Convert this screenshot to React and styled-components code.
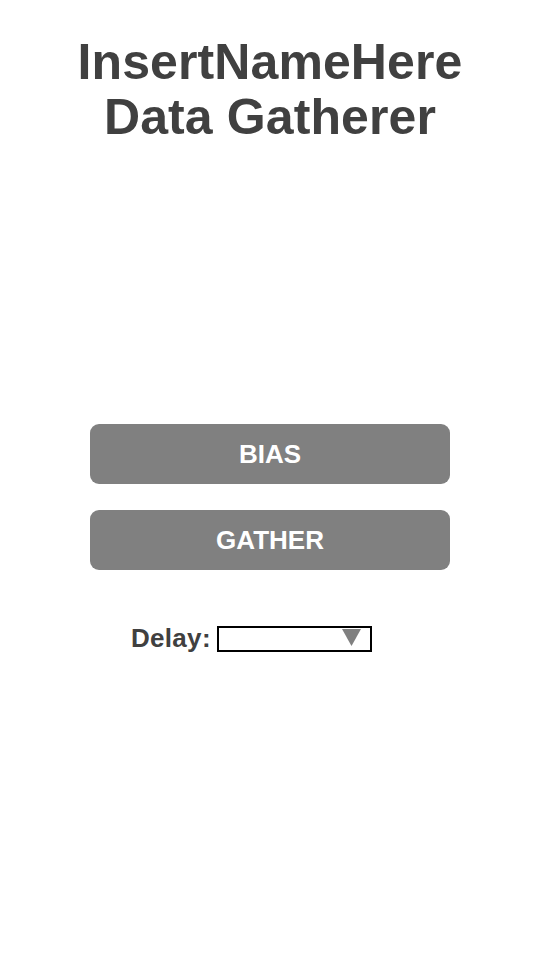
import React from 'react';
import styled, { createGlobalStyle } from 'styled-components';

const GlobalStyle = createGlobalStyle`
  body {
    margin: 0;
    background: #ffffff;
    font-family: "Liberation Sans", Arial, sans-serif;
  }
`;

const Page = styled.div`
  width: 540px;
  height: 960px;
  display: flex;
  flex-direction: column;
  align-items: center;
`;

const Title = styled.h1`
  margin: 35px 0 0;
  font-size: 50px;
  line-height: 55px;
  font-weight: bold;
  color: #404040;
  text-align: center;
  letter-spacing: 0.1px;
`;

const Actions = styled.div`
  margin-top: 279px;
  display: flex;
  flex-direction: column;
  gap: 26px;
`;

const ActionButton = styled.button`
  width: 360px;
  height: 60px;
  border: none;
  border-radius: 9px;
  background: #808080;
  color: #ffffff;
  font-family: "Liberation Sans", Arial, sans-serif;
  font-size: 26px;
  font-weight: bold;
  cursor: pointer;
  padding: 0;
`;

const DelayRow = styled.div`
  margin-top: 53px;
  align-self: flex-start;
  margin-left: 131px;
  display: flex;
  align-items: center;
  gap: 6px;
`;

const Label = styled.span`
  font-size: 26px;
  font-weight: bold;
  color: #404040;
  letter-spacing: 0.3px;
`;

const Select = styled.div`
  box-sizing: border-box;
  width: 155px;
  height: 26px;
  border: 2px solid #000;
  display: flex;
  justify-content: flex-end;
  align-items: flex-start;
  padding: 1px 9px 0 0;
`;

function App() {
  return (
    <>
      <GlobalStyle />
      <Page>
        <Title>
          InsertNameHere
          <br />
          Data Gatherer
        </Title>
        <Actions>
          <ActionButton>BIAS</ActionButton>
          <ActionButton>GATHER</ActionButton>
        </Actions>
        <DelayRow>
          <Label>Delay:</Label>
          <Select>
            <svg width="19" height="17" viewBox="0 0 19 17">
              <polygon points="0,0 19,0 9.5,17" fill="#808080" />
            </svg>
          </Select>
        </DelayRow>
      </Page>
    </>
  );
}

export default App;
